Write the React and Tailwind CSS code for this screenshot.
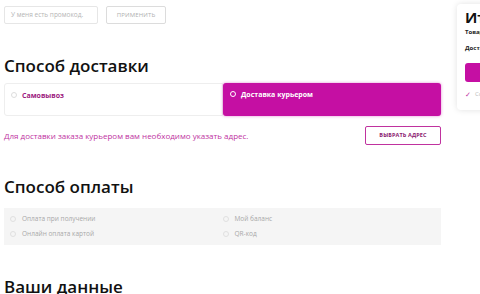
export default function App() {
  const font = { fontFamily: '"Open Sans", "Noto Sans", sans-serif' };
  return (
    <div className="w-[480px] h-[294px] overflow-hidden bg-white flex" style={font}>
      <main className="w-[437px] ml-[4px] shrink-0">
        <div className="flex gap-[8px] mt-[6px]">
          <div className="w-[94px] h-[18px] border border-[#e6e6e6] rounded-[2px] flex items-center pl-[6px] text-[6.5px] text-[#b5b5b5]">
            У меня есть промокод.
          </div>
          <button className="w-[60px] h-[18px] border border-[#dcdcdc] rounded-[2px] text-[6px] text-[#b0b0b0] tracking-wide">
            ПРИМЕНИТЬ
          </button>
        </div>

        <h2 className="mt-[30px] text-[17px] leading-[24px] font-semibold text-[#111]">Способ доставки</h2>
        <div className="mt-[5px] flex h-[33px]">
          <div className="flex-1 border border-[#eeeeee] rounded-l-[3px] flex items-start pt-[7px] pl-[6px] gap-[5px]">
            <span className="w-[6px] h-[6px] rounded-full border border-[#dddddd] mt-[1px]" />
            <span className="text-[7px] font-bold text-[#9c1a80]">Самовывоз</span>
          </div>
          <div className="flex-1 bg-[#c50fa3] rounded-[3px] flex items-start pt-[7px] pl-[7px] gap-[5px] shadow-[0_0_3px_rgba(197,15,163,0.5)]">
            <span className="w-[6px] h-[6px] rounded-full border-[1.5px] border-white mt-[1px]" />
            <span className="text-[7px] font-bold text-white">Доставка курьером</span>
          </div>
        </div>

        <div className="mt-[10px] flex items-center justify-between">
          <p className="text-[8px] text-[#c0329f]">Для доставки заказа курьером вам необходимо указать адрес.</p>
          <button className="w-[76px] h-[19px] border border-[#c0329f] rounded-[2px] text-[5.5px] font-bold text-[#8a1a70] tracking-wide">
            ВЫБРАТЬ АДРЕС
          </button>
        </div>

        <h2 className="mt-[30px] text-[17px] leading-[24px] font-semibold text-[#111]">Способ оплаты</h2>
        <div className="mt-[9px] bg-[#f5f5f5] h-[37px] grid grid-cols-2 px-[6px] py-[3px] text-[6.5px] text-[#a8a8a8]">
          {["Оплата при получении", "Мой баланс", "Онлайн оплата картой", "QR-код"].map((t) => (
            <div key={t} className="flex items-center gap-[6px]">
              <span className="w-[6px] h-[6px] rounded-full border border-[#e0e0e0]" />
              <span>{t}</span>
            </div>
          ))}
        </div>

        <h2 className="mt-[30px] text-[17px] leading-[24px] font-semibold text-[#111]">Ваши данные</h2>
      </main>

      <aside className="ml-[16px] mt-[4px] w-[200px] h-[106px] shrink-0 rounded-[4px] shadow-[0_0_6px_rgba(0,0,0,0.12)] pl-[8px] pt-[3px]">
        <div className="text-[15px] font-bold leading-[20px] text-[#111]">Итого</div>
        <div className="mt-[1px] text-[6px] leading-[9px] font-bold text-[#222]">Товары</div>
        <div className="mt-[7px] text-[6px] leading-[9px] font-bold text-[#222]">Доставка</div>
        <div className="mt-[10px] h-[19px] w-[180px] rounded-[3px] bg-[#c50fa3]" />
        <div className="mt-[8px] flex items-center gap-[4px] text-[6px] leading-[9px] text-[#bbb]">
          <span className="text-[#c0329f] text-[7px]">✓</span>
          <span>Согласен</span>
        </div>
      </aside>
    </div>
  );
}
